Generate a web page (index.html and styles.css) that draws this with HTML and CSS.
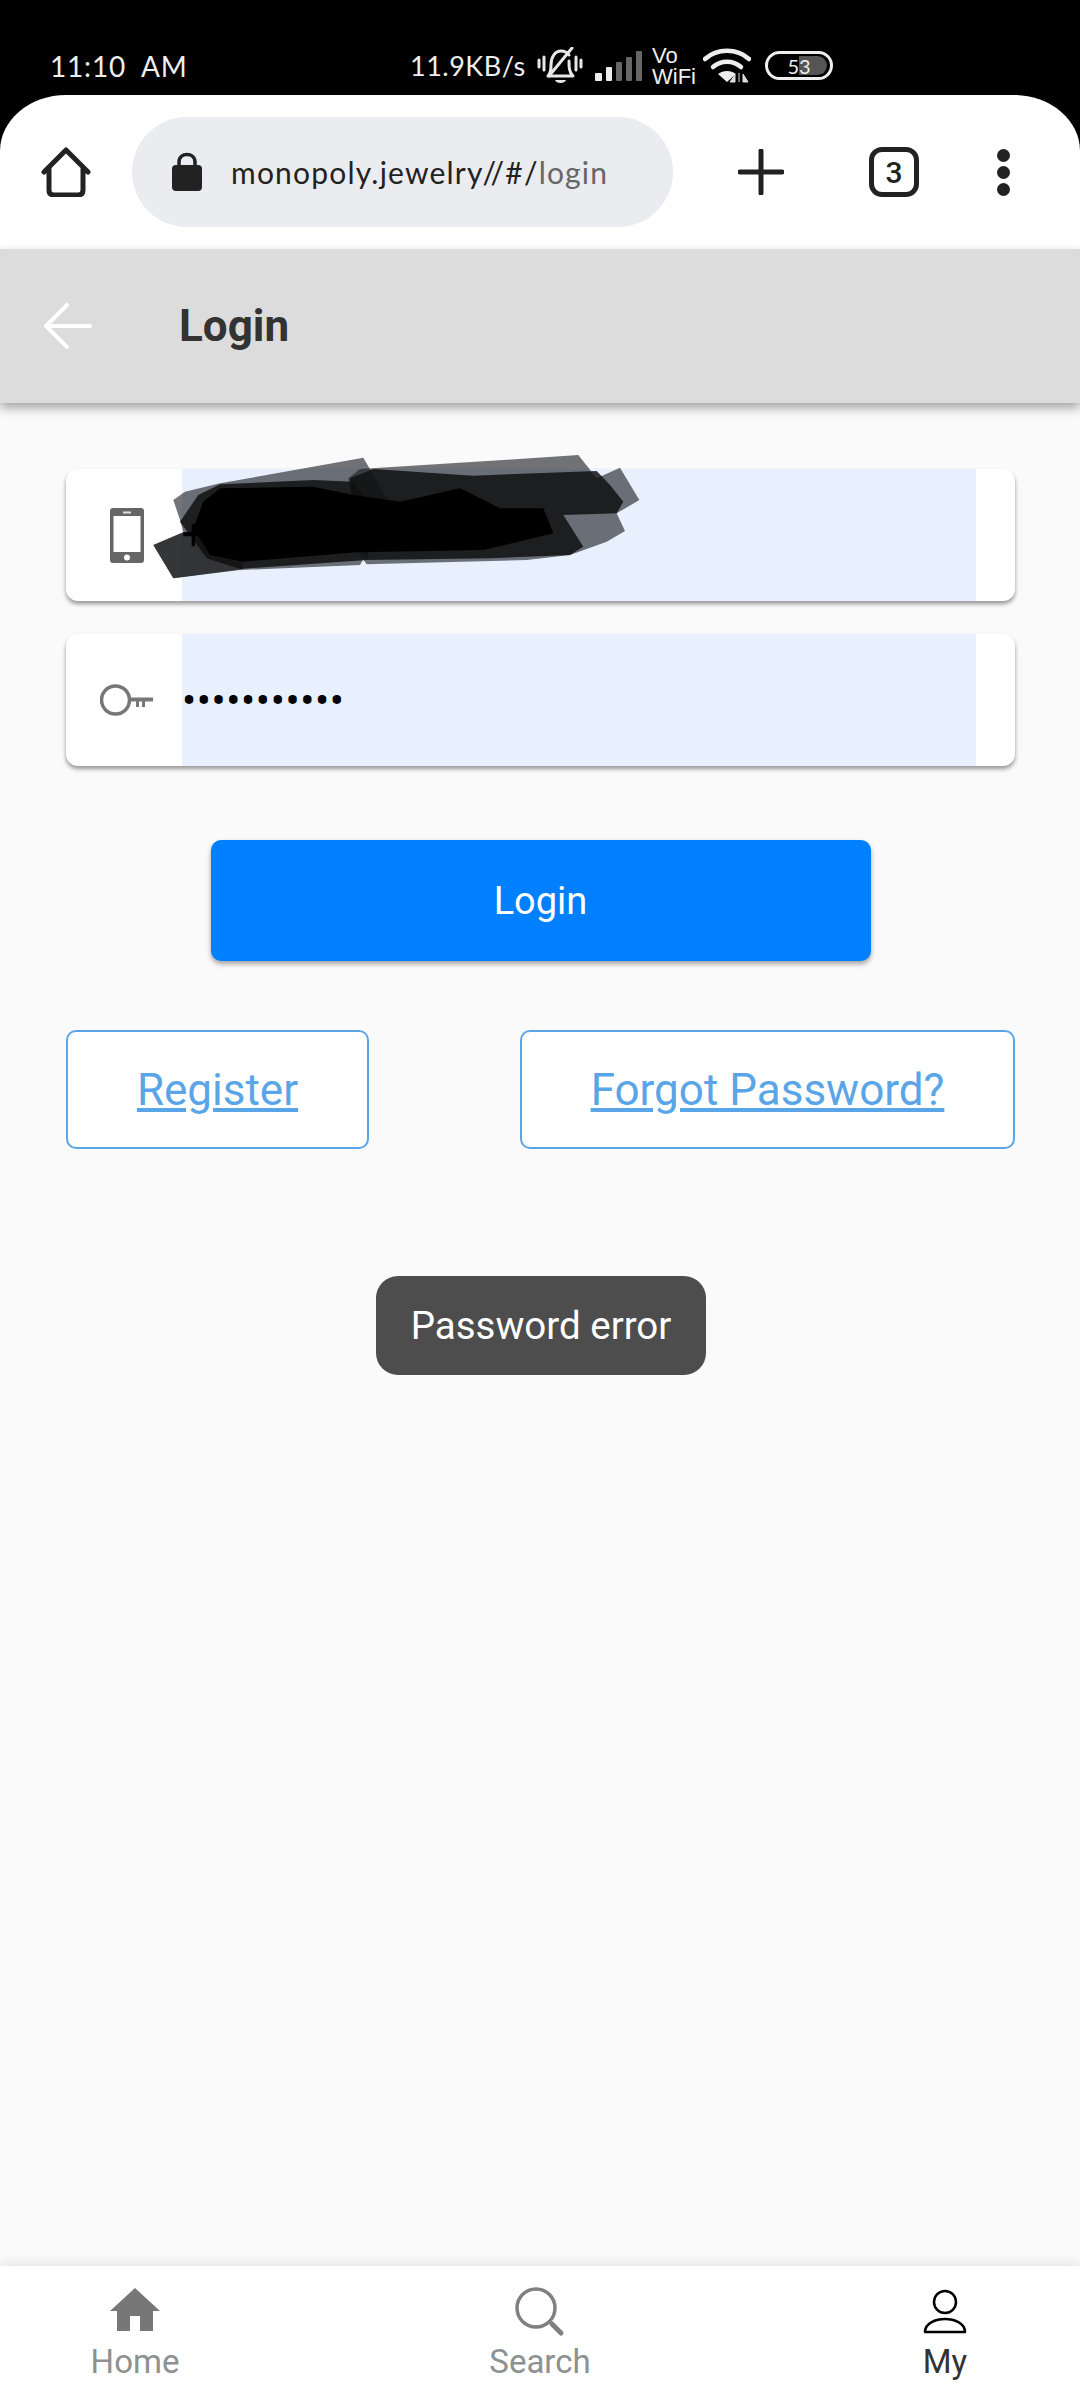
FILE: index.html
```html
<!DOCTYPE html>
<html>
<head>
  <title>Login</title>
  <link rel="stylesheet" href="styles.css">
</head>
<body>
  <div class="page">

    <div class="status-bar">
      <div class="status-time">11:10&nbsp; AM</div>
      <div class="status-speed">11.9KB/s</div>
      <svg class="bell-icon" width="46" height="38" viewBox="0 0 46 38">
        <g fill="none" stroke="#e8e8e8" stroke-width="3" stroke-linecap="round" stroke-linejoin="round">
          <path d="M2 13v7M7 10v13M39 10v13M44 13v7"/>
          <path d="M11 29c3-3 3-6 3-11 0-8 4-14 10-14 3 0 6 1 8 4M32 14c0 6 0 11 4 15H11"/>
          <path d="M12 29L35 1"/>
        </g>
        <path d="M18 33h11c-1 4-10 4-11 0z" fill="#e8e8e8"/>
      </svg>
      <svg class="signal-icon" width="48" height="30" viewBox="0 0 48 30">
        <rect x="0" y="22" width="7" height="8" rx="1" fill="#eee"/>
        <rect x="11" y="16" width="6" height="14" rx="1" fill="#eee"/>
        <rect x="21" y="11" width="6" height="19" rx="1" fill="#666"/>
        <rect x="31" y="6" width="6" height="24" rx="1" fill="#666"/>
        <rect x="41" y="0" width="6" height="30" rx="1" fill="#666"/>
      </svg>
      <div class="vowifi">Vo<br>WiFi</div>
      <svg class="wifi-icon" width="48" height="35" viewBox="0 0 48 35">
        <g fill="none" stroke="#eee" stroke-width="4.5" stroke-linecap="round">
          <path d="M2 11c12-11 32-11 44 0"/>
          <path d="M10 19c8-7 20-7 28 0"/>
        </g>
        <path d="M15 26c5-4 13-4 18 0l-9 8z" fill="#eee"/>
        <path d="M32 34v-7l-5 7zM36 34V25M40 34v-8l5 8z" fill="#ddd" stroke="#ddd"/>
      </svg>
      <div class="battery">
        <div class="battery-level"></div>
        <span class="battery-num">53</span>
      </div>
    </div>

    <div class="browser-bar">
      <svg class="browser-home" width="50" height="50" viewBox="0 0 50 50">
        <path d="M3 25L25 3l22 22M8 22v21q0 5 5 5h24q5 0 5-5V22" fill="none" stroke="#222" stroke-width="5" stroke-linecap="round" stroke-linejoin="round"/>
      </svg>
      <div class="url-pill">
        <svg class="lock-icon" width="30" height="40" viewBox="0 0 30 40">
          <path d="M7 15V10c0-10 16-10 16 0v5" fill="none" stroke="#222" stroke-width="3.5"/>
          <rect x="0" y="13" width="30" height="26" rx="4" fill="#222"/>
        </svg>
        <div class="url-text">monopoly.jewelry//#/<span class="url-path">login</span></div>
      </div>
      <svg class="plus-icon" width="46" height="46" viewBox="0 0 46 46">
        <path d="M23 2v42M2 23h42" stroke="#222" stroke-width="5" stroke-linecap="round"/>
      </svg>
      <div class="tab-count">3</div>
      <div class="menu-dots">
        <span></span><span></span><span></span>
      </div>
    </div>

    <div class="app-header">
      <svg class="back-arrow" width="48" height="46" viewBox="0 0 48 46">
        <path d="M46 23H3M23 2L2 23l21 21" fill="none" stroke="#fff" stroke-width="4" stroke-linecap="round" stroke-linejoin="round"/>
      </svg>
      <div class="app-title">Login</div>
    </div>

    <div class="content">
      <div class="form-box">
        <div class="field-card">
          <div class="field-icon">
            <svg width="34" height="55" viewBox="0 0 34 55">
              <rect width="34" height="55" rx="3" fill="#666"/>
              <rect x="3.5" y="8" width="27" height="36" fill="#fff"/>
              <rect x="13" y="3.5" width="8" height="2" fill="#ddd"/>
              <circle cx="17" cy="49.5" r="3" fill="#fff"/>
            </svg>
          </div>
          <div class="field-input"></div>
        </div>

        <div class="field-card">
          <div class="field-icon">
            <svg width="54" height="34" viewBox="0 0 54 34">
              <circle cx="15.5" cy="17" r="14" fill="none" stroke="#777" stroke-width="3.5"/>
              <path d="M29 14.5h24v4H29zM36 18h3v6h-3zM42 18h3v6h-3z" fill="#777"/>
            </svg>
          </div>
          <div class="field-input"><span class="password-dots">•••••••••••</span></div>
        </div>

        <!-- scribble over the phone number -->
        <svg class="scribble" width="520" height="145" viewBox="0 0 1560 435">
          <path d="M100 165L135 140 240 115 670 38 700 90 760 190 660 360 300 375 100 400 40 300 130 262 120 225z" fill="#1c1e24" fill-opacity=".62"/>
          <path d="M625 100L660 72 1090 45 1315 30 1370 100 1440 68 1498 165 1430 205 1455 258 1400 290 1290 330 1160 345 680 358 660 330z" fill="#1c1e24" fill-opacity=".62"/>
          <path d="M40 300L130 262 300 240 310 372 100 400z" fill="#222" fill-opacity=".75"/>
          <path d="M630 100L700 72 1000 92 1370 78 1410 120 1450 170 1430 205 1270 210 1330 305 1290 330 1050 340 680 345 640 200z" fill="#111" fill-opacity=".85"/>
          <path d="M175 150L240 118 520 105 640 110 700 200 680 345 300 372 200 340 120 230z" fill="#111" fill-opacity=".85"/>
          <path d="M190 170L240 130 520 125 640 150 780 170 960 130 1080 190 1210 190 1240 265 1030 315 650 322 310 350 210 330 160 250z" fill="#000"/>
          <path d="M130 262h25v-25h10v25h20v12h-20v30h-10v-30h-25z" fill="#000"/>
        </svg>
      </div>

      <button class="login-btn" type="button">Login</button>

      <div class="link-row">
        <a class="link-box register-box" href="#">Register</a>
        <a class="link-box forgot-box" href="#">Forgot Password?</a>
      </div>

      <div class="toast">Password error</div>
    </div>

    <div class="bottom-nav">
      <div class="nav-item">
        <svg width="50" height="50" viewBox="0 0 50 50">
          <path d="M25 1L50 24H43V44H30V29H20V44H7V24H0z" fill="#777"/>
        </svg>
        <div class="nav-label">Home</div>
      </div>
      <div class="nav-item">
        <svg width="50" height="50" viewBox="0 0 50 50">
          <circle cx="21" cy="21" r="19" fill="none" stroke="#808080" stroke-width="3.5"/>
          <path d="M37 37l9 9" stroke="#808080" stroke-width="5" stroke-linecap="round"/>
        </svg>
        <div class="nav-label">Search</div>
      </div>
      <div class="nav-item nav-active">
        <svg width="50" height="50" viewBox="0 0 50 50">
          <circle cx="25" cy="15" r="11" fill="none" stroke="#000" stroke-width="2.5"/>
          <path d="M5 45c0-9 11-13 20-13s20 4 20 13z" fill="none" stroke="#000" stroke-width="2.5" stroke-linejoin="round"/>
        </svg>
        <div class="nav-label">My</div>
      </div>
    </div>

  </div>
</body>
</html>
```

FILE: styles.css
```css
body {
  margin: 0;
  background-color: #000;
  font-family: Roboto, Arial, sans-serif;
}

.page {
  display: flex;
  flex-direction: column;
  width: 1080px;
  height: 2400px;
  overflow: hidden;
}

/* phone status bar */
.status-bar {
  display: flex;
  align-items: center;
  flex-shrink: 0;
  height: 59px;
  padding: 36px 0 0 50px;
  color: #eee;
  font-family: Lato, sans-serif;
}

.status-time {
  width: 360px;
  font-size: 28px;
  letter-spacing: .8px;
}

.status-speed {
  width: 127px;
  font-size: 27px;
  letter-spacing: .5px;
}

.signal-icon {
  margin-left: 12px;
}

.vowifi {
  width: 44px;
  margin-left: 9px;
  font-family: "Liberation Sans", sans-serif;
  font-size: 22px;
  line-height: 21px;
}

.wifi-icon {
  margin-left: 7px;
}

.battery {
  position: relative;
  display: flex;
  align-items: center;
  justify-content: center;
  width: 62px;
  height: 23px;
  margin-left: 14px;
  border: 3px solid #eee;
  border-radius: 15px;
}

.battery-level {
  position: absolute;
  top: 2px;
  right: 3px;
  bottom: 2px;
  width: 28px;
  background-color: #555;
  border-radius: 0 10px 10px 0;
}

.battery-num {
  position: relative;
  font-size: 20px;
  line-height: 20px;
}

/* browser toolbar */
.browser-bar {
  display: flex;
  align-items: center;
  flex-shrink: 0;
  height: 154px;
  padding-left: 41px;
  background-color: #fff;
  border-radius: 66px 66px 0 0 / 56px 56px 0 0;
}

.url-pill {
  display: flex;
  align-items: center;
  width: 501px;
  height: 110px;
  margin-left: 41px;
  padding-left: 40px;
  background-color: #ebecf0;
  border-radius: 55px;
}

.url-text {
  margin-left: 29px;
  color: #222;
  font-family: Lato, sans-serif;
  font-size: 30px;
  letter-spacing: 1.2px;
}

.url-path {
  color: #666;
}

.plus-icon {
  margin-left: 65px;
}

.tab-count {
  display: flex;
  align-items: center;
  justify-content: center;
  box-sizing: border-box;
  width: 50px;
  height: 50px;
  margin-left: 85px;
  border: 5px solid #222;
  border-radius: 13px;
  color: #222;
  font-size: 30px;
  font-weight: 500;
}

.menu-dots {
  display: flex;
  flex-direction: column;
  gap: 4px;
  margin-left: 78px;
}

.menu-dots span {
  width: 13px;
  height: 13px;
  background-color: #222;
  border-radius: 50%;
}

/* app header */
.app-header {
  position: relative;
  z-index: 2;
  display: flex;
  align-items: center;
  flex-shrink: 0;
  height: 154px;
  padding-left: 44px;
  background-color: #dcdcdc;
  box-shadow: 0 5px 10px rgba(0, 0, 0, .35);
}

.app-title {
  margin-left: 87px;
  color: #333;
  font-size: 44px;
  font-weight: 700;
}

/* form */
.content {
  position: relative;
  flex: 1;
  padding: 66px 65px 0 66px;
  background-color: #fafafa;
}

.form-box {
  position: relative;
  display: flex;
  flex-direction: column;
  gap: 33px;
}

.field-card {
  display: flex;
  height: 132px;
  background-color: #fff;
  border-radius: 12px;
  box-shadow: 0 3px 4px rgba(0, 0, 0, .4);
  overflow: hidden;
}

.field-icon {
  display: flex;
  align-items: center;
  justify-content: center;
  box-sizing: border-box;
  width: 116px;
  padding-left: 5px;
  flex-shrink: 0;
}

.field-input {
  display: flex;
  align-items: center;
  width: 794px;
  background-color: #e8f0fe;
}

.password-dots {
  color: #000;
  font-size: 42px;
  letter-spacing: .6px;
}

.scribble {
  position: absolute;
  left: 74px;
  top: -24px;
}

.login-btn {
  display: block;
  width: 660px;
  height: 121px;
  margin: 74px auto 0;
  border: none;
  border-radius: 10px;
  background-color: #0080ff;
  box-shadow: 0 3px 5px rgba(0, 0, 0, .35);
  color: #fff;
  font-family: Roboto, Arial, sans-serif;
  font-size: 38px;
}

.link-row {
  display: flex;
  justify-content: space-between;
  margin-top: 69px;
}

.link-box {
  display: flex;
  align-items: center;
  justify-content: center;
  box-sizing: border-box;
  height: 119px;
  border: 2px solid #5aa5e8;
  border-radius: 10px;
  background-color: #fff;
  color: #5aa5e8;
  font-size: 44px;
}

.register-box {
  width: 303px;
}

.forgot-box {
  width: 495px;
}

.toast {
  position: absolute;
  top: 873px;
  left: 376px;
  display: flex;
  align-items: center;
  justify-content: center;
  width: 330px;
  height: 99px;
  background-color: #4d4d4d;
  border-radius: 22px;
  color: #fff;
  font-size: 38.5px;
}

/* bottom nav */
.bottom-nav {
  position: relative;
  display: flex;
  justify-content: space-between;
  flex-shrink: 0;
  box-sizing: border-box;
  height: 134px;
  padding-top: 21px;
  background-color: #fff;
  box-shadow: 0 -2px 12px rgba(0, 0, 0, .1);
}

.nav-item {
  display: flex;
  flex-direction: column;
  align-items: center;
  width: 270px;
  color: #8d9191;
}

.nav-label {
  margin-top: 6px;
  font-size: 33px;
  line-height: 38px;
}

.nav-active {
  color: #333;
}
```
